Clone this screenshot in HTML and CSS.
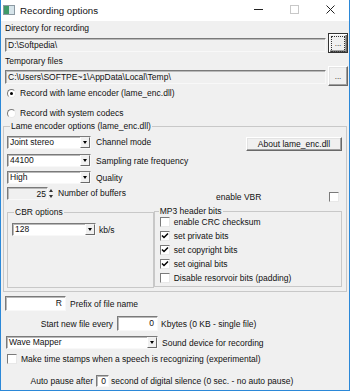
FILE: index.html
```html
<!DOCTYPE html>
<html>
<head>
<meta charset="utf-8">
<title>Recording options</title>
<link rel="stylesheet" href="styles.css">
</head>
<body>
<div class="win">
  <div class="titlebar">
    <svg class="appicon" width="12" height="10" viewBox="0 0 12 10">
      <rect x="0.5" y="0.5" width="11" height="9" fill="#e8ecef" stroke="#8c9aa3"/>
      <rect x="1" y="1" width="5" height="8" fill="#3f9a6a"/>
      <rect x="6" y="1" width="5" height="8" fill="#d6e4ea"/>
    </svg>
    <span class="title">Recording options</span>
    <div class="caption">
      <svg width="9" height="9" viewBox="0 0 9 9"><line x1="0" y1="4.5" x2="9" y2="4.5" stroke="#222" stroke-width="1"/></svg>
      <svg width="9" height="9" viewBox="0 0 9 9"><rect x="0.5" y="0.5" width="8" height="8" fill="none" stroke="#c8c8c8"/></svg>
      <svg width="9" height="9" viewBox="0 0 9 9"><path d="M0.5 0.5L8.5 8.5M8.5 0.5L0.5 8.5" stroke="#222" stroke-width="1"/></svg>
    </div>
  </div>

  <div class="content">
    <div class="lbl first">Directory for recording</div>
    <div class="pathrow">
      <div class="edit ro path">D:\Softpedia\</div>
      <div class="btn dots default"><span class="focusrect">...</span></div>
    </div>
    <div class="lbl second">Temporary files</div>
    <div class="pathrow">
      <div class="edit ro path tight">C:\Users\SOFTPE~1\AppData\Local\Temp\</div>
      <div class="btn dots"><span>...</span></div>
    </div>
    <div class="radiorow"><span class="radio on"></span><span>Record with lame encoder (lame_enc.dll)</span></div>
    <div class="radiorow r2"><span class="radio"></span><span>Record with system codecs</span></div>

    <fieldset class="group lame">
      <legend>Lame encoder options (lame_enc.dll)</legend>
      <div class="lame-body">
        <div class="crow c1">
          <div class="combo w84"><span class="val">Joint stereo</span><span class="drop"><i></i></span></div>
          <span class="clabel">Channel mode</span>
          <div class="btn about">About lame_enc.dll</div>
        </div>
        <div class="crow c2">
          <div class="combo w84"><span class="val">44100</span><span class="drop"><i></i></span></div>
          <span class="clabel">Sampling rate frequency</span>
        </div>
        <div class="crow c3">
          <div class="combo w84"><span class="val">High</span><span class="drop"><i></i></span></div>
          <span class="clabel">Quality</span>
        </div>
        <div class="crow spinrow">
          <div class="spin"><span class="edit ro num">25</span><span class="arrows"><i class="up"></i><i class="dn"></i></span></div>
          <span class="clabel">Number of buffers</span>
          <div class="vbr"><span>enable VBR</span><span class="check"></span></div>
        </div>
        <div class="subgroups">
          <fieldset class="group cbr">
            <legend>CBR options</legend>
            <div class="crow cbrrow">
              <div class="combo w84"><span class="val">128</span><span class="drop"><i></i></span></div>
              <span class="kbs">kb/s</span>
            </div>
          </fieldset>
          <fieldset class="group mp3">
            <legend>MP3 header bits</legend>
            <div class="chk"><span class="check"></span><span>enable CRC checksum</span></div>
            <div class="chk"><span class="check on"><svg width="8" height="8" viewBox="0 0 8 8"><path d="M1 3.5L3 5.5L7 1.5" fill="none" stroke="#000" stroke-width="1.5"/></svg></span><span>set private bits</span></div>
            <div class="chk"><span class="check on"><svg width="8" height="8" viewBox="0 0 8 8"><path d="M1 3.5L3 5.5L7 1.5" fill="none" stroke="#000" stroke-width="1.5"/></svg></span><span>set copyright bits</span></div>
            <div class="chk"><span class="check on"><svg width="8" height="8" viewBox="0 0 8 8"><path d="M1 3.5L3 5.5L7 1.5" fill="none" stroke="#000" stroke-width="1.5"/></svg></span><span>set oiginal bits</span></div>
            <div class="chk"><span class="check"></span><span>Disable resorvoir bits (padding)</span></div>
          </fieldset>
        </div>
      </div>
    </fieldset>

    <div class="frow prefix">
      <div class="edit wprefix right">R</div>
      <span class="after">Prefix of file name</span>
    </div>
    <div class="frow start">
      <span class="before w108">Start new file every</span>
      <div class="edit wstart right">0</div>
      <span class="after3">Kbytes (0 KB - single file)</span>
    </div>
    <div class="frow wave">
      <div class="combo wwave"><span class="val">Wave Mapper</span><span class="drop"><i></i></span></div>
      <span class="after">Sound device for recording</span>
    </div>
    <div class="frow stamps">
      <span class="check"></span>
      <span class="stamptext">Make time stamps when a speech is recognizing (experimental)</span>
    </div>
    <div class="frow pause">
      <span class="before w88">Auto pause after</span>
      <div class="edit wpause right">0</div>
      <span class="after2">second of digital silence (0 sec. - no auto pause)</span>
    </div>
  </div>
</div>
</body>
</html>
```

FILE: styles.css
```css
html, body {
  margin: 0;
  padding: 0;
  background: #f0f0f0;
}
body {
  font-family: "Liberation Sans", Arial, sans-serif;
  font-size: 8.5px;
  color: #111;
}
.win {
  box-sizing: border-box;
  width: 350px;
  height: 391px;
  border: 1px solid #2b88d8;
  border-top: none;
  background: #f0f0f0;
  display: flex;
  flex-direction: column;
  overflow: hidden;
}
.titlebar {
  height: 21px;
  background: #fff;
  display: flex;
  align-items: center;
  flex: none;
}
.appicon {
  margin-left: 2px;
  margin-top: -1px;
}
.title {
  margin-left: 5px;
  font-size: 9.7px;
  margin-top: -1px;
}
.caption {
  margin-left: auto;
  display: flex;
  gap: 27px;
  margin-right: 14px;
  margin-top: -2px;
}
.content {
  padding: 0 1px 0 4px;
  flex: 1;
}
.lbl {
  line-height: 12px;
  height: 12px;
}
.lbl.first { margin-top: 1px; }
.lbl.second { margin-top: 2px; }

.pathrow {
  display: flex;
  height: 20px;
  margin-top: -1px;
}
.edit {
  box-sizing: border-box;
  background: #fff;
  border: 1px solid;
  border-color: #7a7a7a #f8f8f8 #f8f8f8 #7a7a7a;
  box-shadow: inset 1px 1px 0 #b9b9b9;
  line-height: 12px;
  white-space: nowrap;
  overflow: hidden;
}
.edit.ro { background: #f0f0f0; }
.path {
  flex: 1;
  height: 14px;
  margin-top: 5px;
  padding-left: 2px;
}
.path.tight { margin-top: 4px; }

.btn {
  box-sizing: border-box;
  background: #f0f0f0;
  border: 1px solid;
  border-color: #fff #696969 #696969 #fff;
  box-shadow: inset -1px -1px 0 #a0a0a0, inset 1px 1px 0 #e3e3e3;
  display: flex;
  align-items: center;
  justify-content: center;
  line-height: 10px;
}
.btn.dots {
  width: 20px;
  height: 20px;
  margin-left: 2px;
}
.btn.dots span {
  font-size: 8px;
  margin-top: 2px;
  padding: 0 1px;
}
.btn.default {
  border: 1px solid #333;
  box-shadow: inset 1px 1px 0 #fff, inset -1px -1px 0 #696969, inset -2px -2px 0 #a0a0a0;
}
.focusrect {
  outline: 1px dotted #333;
  outline-offset: 2px;
}

.radiorow {
  display: flex;
  align-items: center;
  height: 14px;
}
.radiorow.r2 { margin-top: 6px; }
.radio {
  box-sizing: border-box;
  width: 9px;
  height: 9px;
  border-radius: 50%;
  border: 1px solid;
  border-color: #7a7a7a #e8e8e8 #e8e8e8 #7a7a7a;
  background: #fff;
  margin-left: 2px;
  margin-right: 4px;
  display: flex;
  align-items: center;
  justify-content: center;
}
.radio.on::after {
  content: "";
  width: 3px;
  height: 3px;
  border-radius: 50%;
  background: #000;
}

.group {
  margin: 0;
  padding: 0;
  border: 1px solid #c8c8c8;
  min-width: 0;
}
.group legend {
  padding: 0 1px;
  margin-left: 6px;
  line-height: 12px;
}
.lame {
  margin: 0 1px 0 -2px;
}
.lame-body {
  padding: 4px 4px 3px 3px;
}
.crow {
  display: flex;
  align-items: center;
}
.c1 { height: 13px; align-items: flex-start; }
.c1 .clabel { margin-top: 0; }
.c2 { margin-top: 5px; }
.c3 { margin-top: 4px; }
.spinrow { margin-top: 3px; align-items: flex-start; height: 15px; }

.combo {
  box-sizing: border-box;
  height: 13px;
  display: flex;
  background: #fff;
  border: 1px solid;
  border-color: #7a7a7a #f8f8f8 #f8f8f8 #7a7a7a;
  box-shadow: inset 1px 1px 0 #b9b9b9;
}
.combo .val {
  flex: 1;
  line-height: 11px;
  padding-left: 2px;
  white-space: nowrap;
}
.combo .drop {
  box-sizing: border-box;
  width: 10px;
  background: #f0f0f0;
  border: 1px solid;
  border-color: #f0f0f0 #696969 #696969 #fff;
  display: flex;
  align-items: center;
  justify-content: center;
}
.combo .drop i {
  width: 0;
  height: 0;
  border-left: 2.5px solid transparent;
  border-right: 2.5px solid transparent;
  border-top: 3px solid #000;
}
.w84 { width: 84px; }
.clabel { margin-left: 5px; line-height: 12px; }
.spinrow .clabel { margin-left: 4px; margin-top: 0; }

.btn.about {
  margin-left: auto;
  width: 96px;
  height: 14px;
  margin-top: 1px;
  flex: none;
}

.spin {
  display: flex;
  height: 13px;
}
.edit.num {
  width: 41px;
  height: 13px;
  text-align: right;
  padding-right: 1px;
}
.arrows {
  width: 6px;
  display: flex;
  flex-direction: column;
  justify-content: space-around;
  align-items: center;
  background: #f0f0f0;
}
.arrows i {
  width: 0;
  height: 0;
  border-left: 2px solid transparent;
  border-right: 2px solid transparent;
}
.arrows .up { border-bottom: 3px solid #333; }
.arrows .dn { border-top: 3px solid #333; }

.vbr {
  margin-left: auto;
  margin-right: 3px;
  width: 123px;
  display: flex;
  justify-content: space-between;
  align-items: center;
  margin-top: 5px;
  height: 10px;
}

.check {
  box-sizing: border-box;
  width: 10px;
  height: 10px;
  background: #fff;
  border: 1px solid;
  border-color: #7a7a7a #e8e8e8 #e8e8e8 #7a7a7a;
  display: flex;
  align-items: center;
  justify-content: center;
  flex: none;
}

.subgroups {
  display: flex;
  margin-top: 5px;
}
.cbr {
  width: 148px;
  height: 81px;
  box-sizing: border-box;
}
.cbr legend { line-height: 10px; }
.cbrrow {
  padding: 6px 0 0 4px;
}
.kbs { margin-left: 3px; line-height: 12px; }

.mp3 {
  width: 190px;
  height: 80px;
  box-sizing: border-box;
}
.mp3 legend { line-height: 8px; margin-left: 4px; }
.chk {
  display: flex;
  align-items: center;
  height: 14px;
  padding-left: 5px;
}
.chk .check { margin-right: 4px; }

.frow {
  display: flex;
  align-items: center;
}
.prefix { margin-top: 4px; height: 15px; }
.wprefix {
  width: 61px;
  height: 15px;
}
.right { text-align: right; padding-right: 3px; line-height: 13px; }
.after { margin-left: 4px; }
.after2 { margin-left: 2px; }
.after3 { margin-left: 3px; }
.before { text-align: right; }
.w108 { width: 108px; margin-right: 4px; }
.w88 { width: 88px; margin-right: 3px; }
.start { margin-top: 5px; height: 15px; }
.wstart { width: 41px; height: 15px; }
.wave { margin-top: 5px; height: 13px; }
.wwave { width: 152px; margin-left: 1px; }
.stamps { margin-top: 5px; height: 10px; }
.stamps .check { margin-left: 2px; }
.stamptext { margin-left: 4px; }
.pause { margin-top: 11px; height: 12px; }
.wpause { width: 13px; height: 12px; line-height: 10px; padding-right: 2px; }
```
